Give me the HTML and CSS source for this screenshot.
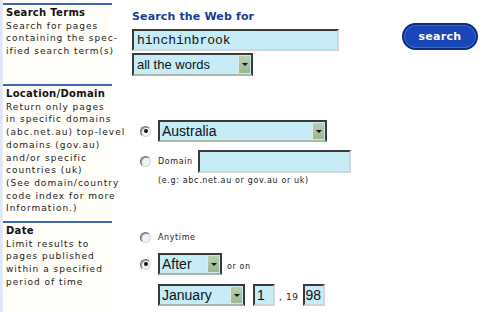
FILE: index.html
```html
<!DOCTYPE html>
<html>
<head>
<meta charset="utf-8">
<link rel="stylesheet" href="styles.css">
</head>
<body>
<div class="page">
  <section class="row row-terms">
    <div class="side">
      <h2>Search Terms</h2>
      <p>Search for pages<br>containing the spec-<br>ified search term(s)</p>
    </div>
    <div class="main main-terms">
      <div class="query">
        <h1>Search the Web for</h1>
        <input class="field field-query" type="text" value="hinchinbrook">
        <div class="sel sel-words"><select><option>all the words</option></select><span class="sel-btn"></span></div>
      </div>
      <button class="search-btn">search</button>
    </div>
  </section>
  <section class="row row-loc">
    <div class="side">
      <h2>Location/Domain</h2>
      <p>Return only pages<br>in specific domains<br>(abc.net.au) top-level<br>domains (gov.au)<br>and/or specific<br>countries (uk)<br>(See domain/country<br>code index for more<br>Information.)</p>
    </div>
    <div class="main main-loc">
      <div class="opt opt-country">
        <input class="radio" type="radio" name="loc" checked>
        <div class="sel sel-country"><select><option>Australia</option></select><span class="sel-btn"></span></div>
      </div>
      <div class="opt opt-domain">
        <input class="radio" type="radio" name="loc">
        <span class="small lbl-domain">Domain</span>
        <input class="field field-domain" type="text">
      </div>
      <div class="small hint">(e.g: abc.net.au or gov.au or uk)</div>
    </div>
  </section>
  <section class="row row-date">
    <div class="side">
      <h2>Date</h2>
      <p>Limit results to<br>pages published<br>within a specified<br>period of time</p>
    </div>
    <div class="main main-date">
      <div class="opt opt-any">
        <input class="radio" type="radio" name="date">
        <span class="small">Anytime</span>
      </div>
      <div class="opt opt-after">
        <input class="radio" type="radio" name="date" checked>
        <div class="sel sel-after"><select><option>After</option></select><span class="sel-btn"></span></div>
        <span class="small oron">or on</span>
      </div>
      <div class="opt opt-day">
        <div class="sel sel-month"><select><option>January</option></select><span class="sel-btn"></span></div>
        <input class="field field-day" type="text" value="1">
        <span class="small comma">, 19</span>
        <input class="field field-year" type="text" value="98">
      </div>
    </div>
  </section>
</div>
</body>
</html>
```
FILE: styles.css
```css
html, body {
  margin: 0;
  background: #fff;
}
body {
  font-family: "DejaVu Sans", Verdana, sans-serif;
  color: #1a1a1a;
}
.page {
  width: 485px;
  height: 312px;
  box-sizing: border-box;
  padding: 3px 0 0 3px;
  background: linear-gradient(to right, #dce4f4 0, #e8eef8 3px, #fff 3px);
  overflow: hidden;
}
.row {
  display: flex;
}
.row-terms { height: 81px; }
.row-loc { height: 137px; }
.row-date { height: 91px; }

.side {
  width: 109px;
  flex: none;
  box-sizing: border-box;
  border-top: 2px solid #3a66b4;
  padding: 2px 0 0 3px;
  background: #fffef9;
  font-size: 9px;
  line-height: 12.7px;
  white-space: nowrap;
  color: #222;
}
.side h2 {
  margin: 0;
  font-size: 10px;
  line-height: 12.7px;
  font-weight: bold;
  color: #111;
  letter-spacing: 0.3px;
}
.side p {
  margin: 0;
  letter-spacing: 1px;
}

.main {
  flex: 1;
}
.main-terms {
  display: flex;
  align-items: flex-start;
  padding: 7px 0 0 20px;
}
.query {
  display: flex;
  flex-direction: column;
  width: 207px;
}
.query h1 {
  margin: 0 0 5px;
  font-size: 11px;
  line-height: 14px;
  font-weight: bold;
  color: #1c3a8e;
  white-space: nowrap;
  letter-spacing: 0.15px;
}

.field {
  box-sizing: border-box;
  border-style: solid;
  border-width: 2px;
  border-color: #3a3a3a #d4d4d4 #d4d4d4 #3a3a3a;
  background: #c6ecf8;
  margin: 0;
  outline: none;
  font-family: "Liberation Sans", Arial, sans-serif;
  font-size: 14px;
  color: #111;
}
.field-query {
  width: 207px;
  height: 22px;
  padding: 0 3px;
  font-family: "Liberation Mono", "Courier New", monospace;
  font-size: 13px;
}

.sel {
  display: flex;
  box-sizing: border-box;
  border-style: solid;
  border-width: 2px;
  border-color: #3a3a3a #3a3a3a #a8b8a8 #3a3a3a;
  background: #c6ecf8;
}
.sel select {
  appearance: none;
  -webkit-appearance: none;
  flex: 1;
  min-width: 0;
  border: none;
  background: transparent;
  margin: 0;
  padding: 0 0 0 2px;
  font-family: "Liberation Sans", Arial, sans-serif;
  font-size: 14px;
  color: #111;
  outline: none;
}
.sel-btn {
  width: 11px;
  flex: none;
  margin: 1px 1px 1px 0;
  background: linear-gradient(#b8d0b0, #98b890);
  border-left: 1px solid #e0ece0;
  display: flex;
  align-items: center;
  justify-content: center;
}
.sel-btn::after {
  content: "";
  border-left: 3px solid transparent;
  border-right: 3px solid transparent;
  border-top: 3px solid #111;
}
.sel-words {
  margin-top: 2px;
  width: 121px;
  height: 23px;
}
.sel-words select {
  font-size: 13px;
  padding-left: 3px;
}

.search-btn {
  margin: 13px 0 0 63px;
  width: 76px;
  height: 27px;
  box-sizing: border-box;
  border: 2px solid #0c2a80;
  border-radius: 14px;
  background: #1848b8;
  box-shadow: inset 0 0 0 1px #3a6ad0;
  color: #fff;
  font-family: "DejaVu Sans", Verdana, sans-serif;
  font-size: 11px;
  font-weight: bold;
  padding: 0 0 1px;
  letter-spacing: 0.3px;
}

.main-loc,
.main-date {
  display: flex;
  flex-direction: column;
  align-items: flex-start;
  padding-left: 28px;
}
.main-loc { padding-top: 36px; }
.main-date { padding-top: 10px; }

.opt {
  display: flex;
  align-items: center;
}
.radio {
  appearance: none;
  -webkit-appearance: none;
  width: 11px;
  height: 11px;
  box-sizing: border-box;
  margin: 0 7px 0 0;
  border-radius: 50%;
  border: 1px solid;
  border-color: #6a6a6a #d8d8d8 #d8d8d8 #6a6a6a;
  background: #f2f2f2;
  box-shadow: inset 1px 1px 0 #a0a0a0;
  display: flex;
  align-items: center;
  justify-content: center;
  flex: none;
}
.radio:checked::after {
  content: "";
  width: 4px;
  height: 4px;
  border-radius: 50%;
  background: #111;
}

.small {
  font-size: 8px;
  letter-spacing: 0.6px;
  color: #222;
  white-space: nowrap;
}

.sel-country {
  width: 169px;
  height: 22px;
}
.opt-domain {
  margin-top: 8px;
}
.lbl-domain {
  margin: 0 5px 0 0;
}
.field-domain {
  width: 153px;
  height: 23px;
}
.hint {
  margin: 2px 0 0 18px;
  line-height: 11px;
  letter-spacing: 0.65px;
}

.opt-any {
  height: 12px;
}
.opt-after {
  margin-top: 10px;
}
.sel-after {
  width: 64px;
  height: 22px;
}
.oron {
  margin: 5px 0 0 5px;
}
.opt-day {
  margin: 9px 0 0 18px;
}
.sel-month {
  width: 87px;
  height: 22px;
}
.field-day {
  margin-left: 8px;
  width: 22px;
  height: 22px;
  padding: 0 2px;
}
.comma {
  margin: 4px 4px 0 4px;
  font-size: 9px;
}
.field-year {
  width: 22px;
  height: 22px;
  padding: 0 1px;
}
```
